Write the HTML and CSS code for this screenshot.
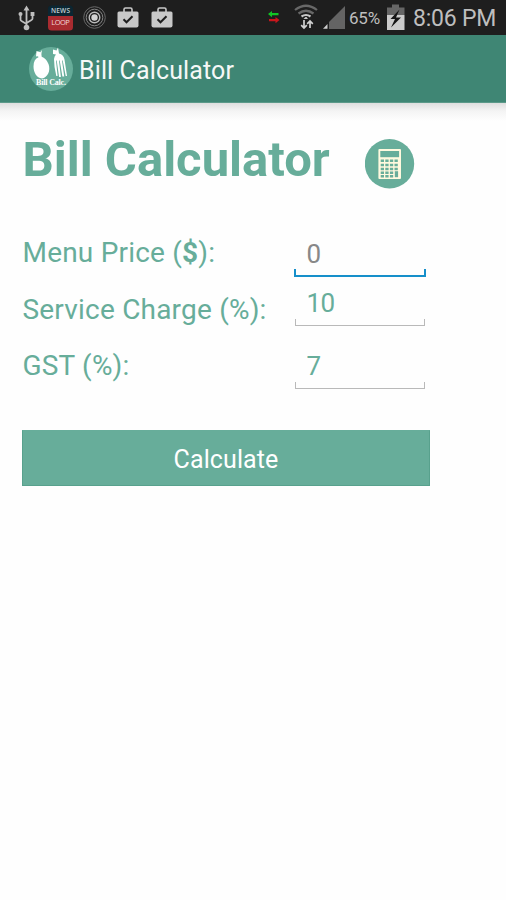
FILE: index.html
```html
<!DOCTYPE html>
<html lang="en">
<head>
<meta charset="utf-8">
<title>Bill Calculator</title>
<link rel="stylesheet" href="styles.css">
</head>
<body>
<header class="status">
  <svg class="status-icons" width="180" height="35" viewBox="0 0 180 35">
    <g stroke="#bebebe" fill="none" stroke-width="1.8">
      <path d="M26.500 9V27M20.500 15v4.500q0 1 1 1.500l5 3M32.500 15v3.500q0 1-1 1.500l-5 3"/>
    </g>
    <g fill="#bebebe">
      <path d="M23.500 10.500L26.500 5.500l3 5z"/><circle cx="20.500" cy="14" r="2"/><path d="M30.600 12h3.800v4h-3.800z"/><circle cx="26.500" cy="27.500" r="2.800"/>
    </g>
    <path d="M48 16H73V27q0 3.500-3.500 3.500h-18Q48 30.500 48 27z" fill="#a92b30"/>
    <path d="M48 16V9q0-3.500 3.500-3.500h18Q73 5.500 73 9v7z" fill="#0b2632"/>
    <text class="news" x="60.500" y="13.300" textLength="19">NEWS</text>
    <text class="loop" x="60.500" y="25" textLength="18.500">LOOP</text>
    <g fill="none" stroke="#858585" stroke-width="1">
      <circle cx="94.500" cy="17.500" r="10.800" stroke="#686868"/><circle cx="94.500" cy="17.500" r="8.300"/><circle cx="94.500" cy="17.500" r="5.300" stroke="#bbb" stroke-width="1.400"/>
    </g>
    <circle cx="94.500" cy="17.500" r="3.200" fill="#d4d4d4"/>
    <g id="bag">
      <path d="M124 12V9.500q0-1.500 1.500-1.500h5q1.500 0 1.500 1.500V12" fill="none" stroke="#c8c8c8" stroke-width="1.600"/>
      <path d="M119 11.500h18q1.500 0 1.500 1.500v12.500q0 2-2 2h-17q-2 0-2-2V13q0-1.500 1.500-1.500z" fill="#c8c8c8"/>
      <path d="M123.500 19.300l3 3 6-6" fill="none" stroke="#1e1e1e" stroke-width="2"/>
    </g>
    <use href="#bag" x="34"/>
  </svg>
  <div class="status-right">
    <svg width="80" height="35" viewBox="266 0 80 35">
      <path d="M268 14l4-3v2h6.500v2.200H272v2z" fill="#10c525"/>
      <path d="M279.500 20l-4-3v2H269v2.200h6.500v2z" fill="#c9161c"/>
      <g fill="none" stroke-width="2.200">
        <path d="M295 10q11-8.500 22 0" stroke="#686868"/><path d="M298.500 13.500q7.500-5.500 15 0" stroke="#686868"/>
        <path d="M301.500 16.500q4.500-3 9 0" stroke="#c8c8c8"/>
      </g>
      <path d="M303.500 19l2-2h1l1.500 2z" fill="#c8c8c8"/>
      <path d="M304 20v8m-2.800-2.800L304 28l2.800-2.800M310 28v-7m-2.800 2.800L310 21l2.800 2.800" fill="none" stroke="#d2d2d2" stroke-width="1.700"/>
      <path d="M345 6v23h-16v-7z" fill="#646464"/><path d="M327.500 24v4.700h-4.500z" fill="#d0d0d0"/>
    </svg>
    <span class="percent">65%</span>
    <svg class="battery" width="18" height="35" viewBox="387 0 18 35">
      <path d="M392 4.500h7v3h5.500V15H387V7.500h5z" fill="#666"/><path d="M387 15h17.500v15H387z" fill="#ccc"/>
      <path d="M399.500 9.500L390.500 19h4.500l-4 8.500 10-10h-5z" fill="#161616"/>
    </svg>
    <time class="clock">8:06 PM</time>
  </div>
</header>
<div class="appbar">
  <svg class="logo" width="44" height="44" viewBox="0 0 44 44">
    <circle cx="22" cy="22" r="22" fill="#67ad9a"/>
    <path d="M7.500 4l3.800 1.300 1.700-2.300q-1 4-.3 6.800Q17 11 19.500 17c2.500 7-1 13.500-6.500 14.500C7.500 31 4.500 25 4.500 19.500q0-7.500 5-9.200Q9.500 9 7 9.500z" fill="#fff"/>
    <path d="M24 2.500l3.500 1 1.500-3 1 6q4.500 1 5.500 6L38 29h-1.300l-3-15.500h-.7l2.200 16h-1.800l-2.700-16H30l1.900 16.500h-1.800l-2.400-16.500H27L28.600 29h-1.300q-2.300-9-2.300-17 .3-3 2-4.500L24 7z" fill="#fff"/>
    <text class="logo-text" x="22" y="38.300" textLength="30">Bill Calc.</text>
  </svg>
  <span class="app-title">Bill Calculator</span>
</div>
<main>
  <div class="heading">
    <h1>Bill Calculator</h1>
    <svg width="50" height="50" viewBox="0.5 0.3 50 50">
      <circle cx="25" cy="25" r="24.700" fill="#67ad9a"/>
      <rect x="13.900" y="10.300" width="22.600" height="30" rx="1" fill="#fff9df"/>
      <path d="M15.800 12.300h18.800v6.200H15.800z" fill="#67ad9a"/>
      <path d="M16.200 22h18M16.200 26.300h18M16.200 30.200h18M16.200 34h12.800M16.200 37.500h12.800" stroke="#67ad9a" stroke-width="2.500" stroke-dasharray="3.300 1.300"/>
      <path d="M30.300 32.500h3.300v6h-3.300z" fill="#67ad9a"/>
    </svg>
  </div>
  <form class="form">
    <div class="labels">
      <label for="price">Menu Price (<b>$</b>):</label>
      <label for="service">Service Charge (%):</label>
      <label for="gst">GST (%):</label>
    </div>
    <div class="fields">
      <div class="field active"><input id="price" placeholder="0"></div>
      <div class="field service"><input id="service" value="10"></div>
      <div class="field gst"><input id="gst" value="7"></div>
    </div>
  </form>
  <button type="button">Calculate</button>
</main>
</body>
</html>
```

FILE: styles.css
```css
* { box-sizing: border-box; }
body {
  margin: 0;
  height: 900px;
  overflow: hidden;
  background: #fefefe;
  color: #67ad9a;
  font-family: Roboto, sans-serif;
}
svg { display: block; flex: none; }
.status {
  display: flex;
  justify-content: space-between;
  height: 35px;
  background: #1e1e1e;
  color: #bebebe;
}
.status-right { display: flex; align-items: center; width: 240px; white-space: nowrap; }
.news, .loop { text-anchor: middle; font-family: "Open Sans", sans-serif; }
.news { font-size: 6.5px; font-weight: 600; fill: #c1d0d5; }
.loop { font-size: 7.5px; fill: #f1d5d5; }
.percent { width: 37px; margin-left: 3px; font-size: 17px; letter-spacing: -0.2px; }
.battery { margin-left: 1px; }
.clock { margin: 1px 0 0 8px; font-size: 23px; letter-spacing: -0.2px; }
.appbar {
  display: flex;
  align-items: center;
  height: 68px;
  padding-left: 29px;
  background: #3f8674;
  border-bottom: 1px solid #5b9989;
  color: #f5f8f7;
}
.logo-text { font: 700 8px "Liberation Serif", serif; fill: #fff; text-anchor: middle; }
.app-title { margin: 3px 0 0 6px; font-size: 25px; letter-spacing: 0.12px; }
main {
  height: 797px;
  padding: 30px 22px 0;
  background: linear-gradient(#dedede, #f4f4f4 8px, #fefefe 18px);
}
.heading { display: flex; height: 60px; }
h1 { width: 342px; margin: -3px 0 0; padding-left: 0.5px; font-size: 49px; line-height: 60px; font-weight: 700; white-space: nowrap; }
.heading svg { margin: 6px 0 0 1px; }
.form { display: flex; width: 404px; height: 206px; margin: 31px 0 0; }
.labels { width: 272px; padding: 1px 0 0 0.5px; }
label { display: block; height: 56.5px; line-height: 56px; font-size: 28px; letter-spacing: 0.2px; white-space: nowrap; }
b { font-weight: 700; }
.fields { width: 132px; padding-top: 3px; }
.field { height: 50px; display: flex; flex-direction: column; }
.service { height: 49px; }
.gst { height: 63px; padding-top: 14px; }
.field::after { content: ""; height: 6px; margin: 0 1px; border: solid #b9b9b9; border-width: 0 1px 1px; }
.field.active::after { margin: 0; border-color: #168fca; border-width: 0 2px 2px; }
input { width: 100%; min-height: 0; flex: 1; padding: 9px 12.5px 0; border: 0; background: none; outline: 0; font: 26px Roboto, sans-serif; letter-spacing: -0.6px; color: #67ad9a; }
.active input { padding-top: 11px; }
input::placeholder { color: #888; opacity: 1; }
button { display: block; width: 408px; height: 56px; padding: 2px 0 0; border: 1px solid #58a18d; border-top-color: #67ad9a; background: #67ad9a; color: #fff; font: 25px Roboto, sans-serif; letter-spacing: 0.1px; }
```
